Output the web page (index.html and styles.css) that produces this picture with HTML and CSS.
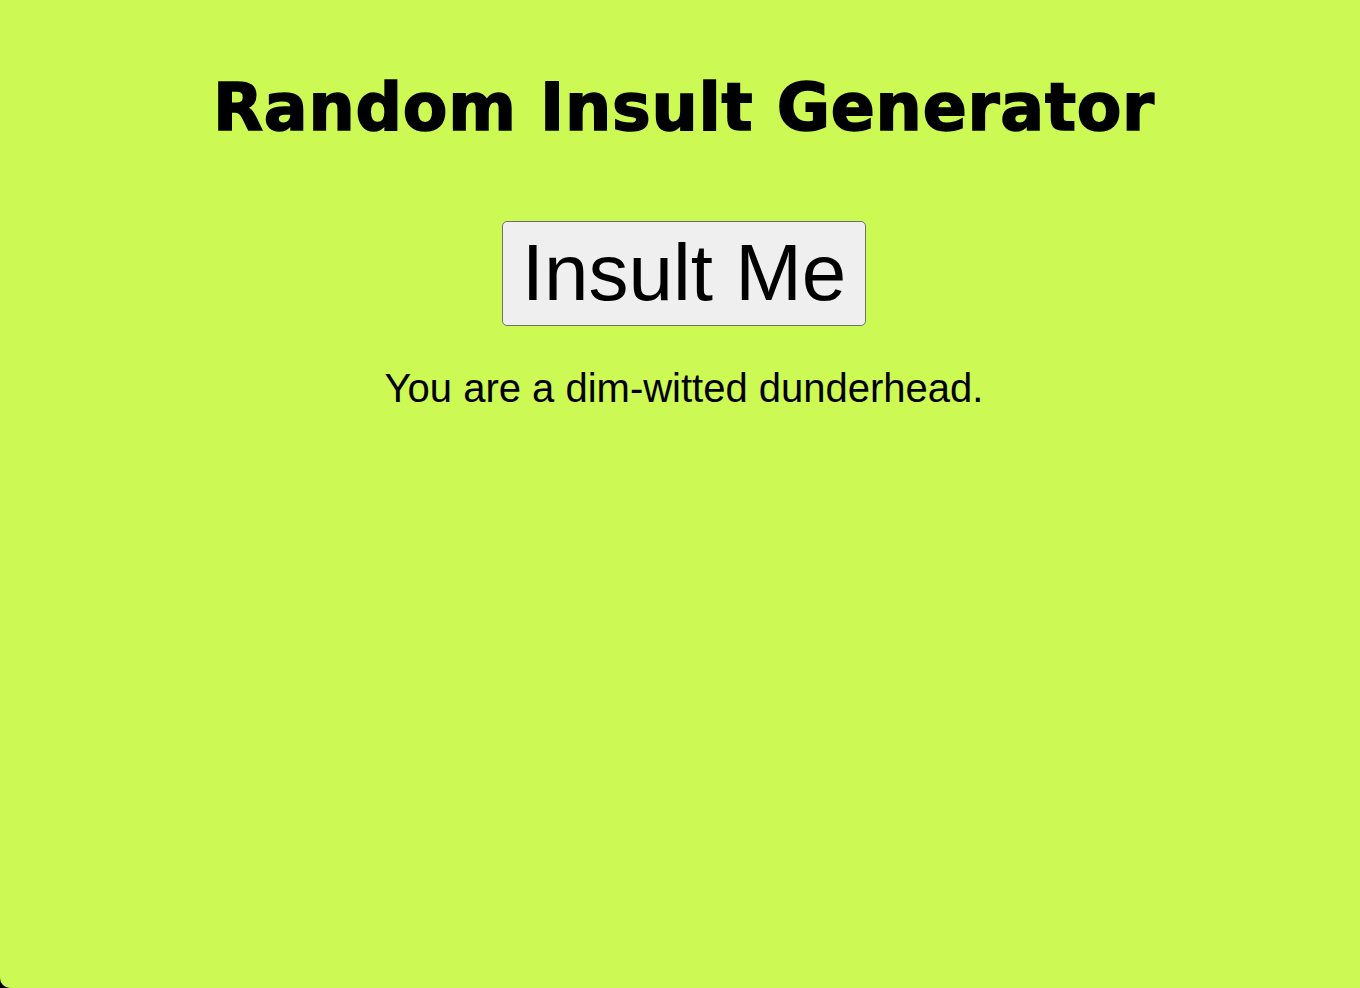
FILE: index.html
```html
<!DOCTYPE html>
<html lang="en">
<head>
<meta charset="utf-8">
<title>Random Insult Generator</title>
<link rel="stylesheet" href="styles.css">
</head>
<body>
<main class="page">
  <h1 class="title">Random Insult Generator</h1>
  <button class="insult-btn" type="button">Insult Me</button>
  <p class="insult">You are a dim-witted dunderhead.</p>
</main>
</body>
</html>
```

FILE: styles.css
```css
html {
  background: #000;
  margin: 0;
  padding: 0;
}
body {
  margin: 0;
  padding: 0;
  background: #ccf953;
  min-height: 100vh;
  border-bottom-left-radius: 10px;
  color: #000;
}
.page {
  display: flex;
  flex-direction: column;
  align-items: center;
  padding-top: 68px;
  padding-left: 8px;
}
.title {
  margin: 0;
  font-family: "DejaVu Sans", sans-serif;
  font-weight: 700;
  font-size: 65px;
  line-height: 80px;
  -webkit-text-stroke: 1.6px #000;
  letter-spacing: 0.75px;
}
.insult-btn {
  margin-top: 73px;
  font-family: "Liberation Sans", Arial, sans-serif;
  font-size: 80px;
  line-height: 92px;
  padding: 5px 19px 6px;
  border: 1.5px solid #707070;
  border-radius: 5px;
  background: #efefef;
  color: #000;
}
.insult {
  margin: 39px 0 0;
  font-family: "Liberation Sans", Arial, sans-serif;
  font-size: 40px;
  line-height: 46px;
}
```
